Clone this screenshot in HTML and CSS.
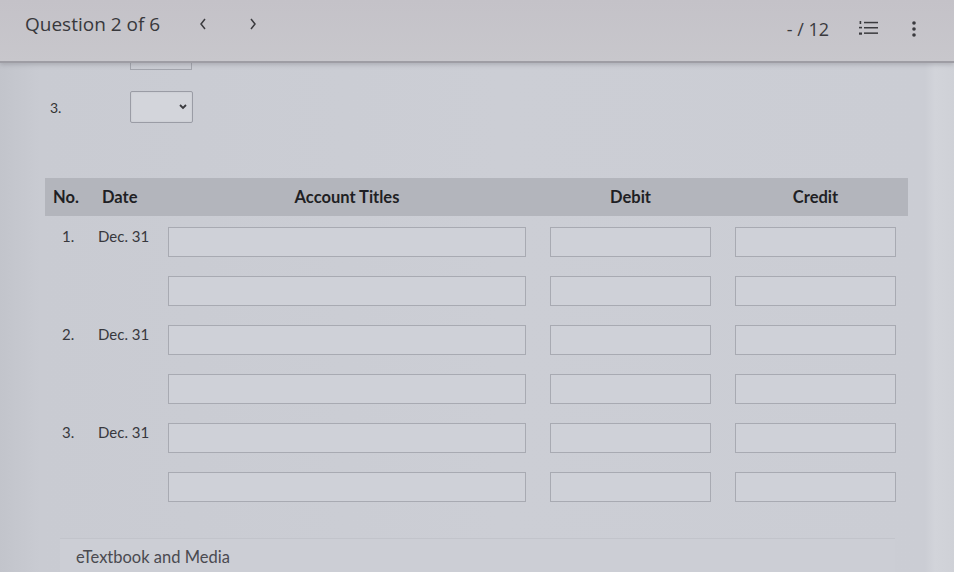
FILE: index.html
```html
<!DOCTYPE html>
<html lang="en">
<head>
<meta charset="utf-8">
<title>Question 2 of 6</title>
<link rel="stylesheet" href="styles.css">
</head>
<body>
<div class="page">
  <header class="topbar">
    <div class="title">Question 2 of 6</div>
    <nav class="pager">
      <svg class="chev" width="10" height="14" viewBox="0 0 10 14"><path d="M7 2 L3 7 L7 12" fill="none" stroke="#3a3a3e" stroke-width="1.5"/></svg>
      <svg class="chev" width="10" height="14" viewBox="0 0 10 14"><path d="M3 2 L7 7 L3 12" fill="none" stroke="#3a3a3e" stroke-width="1.5"/></svg>
    </nav>
    <div class="spacer"></div>
    <div class="score">- / 12</div>
    <svg class="listicon" width="19" height="15" viewBox="0 0 19 15">
      <g fill="#3a3a3e">
        <rect x="0.6" y="0" width="1.6" height="3"/>
        <rect x="0" y="5.8" width="3" height="1.6"/>
        <rect x="0" y="11.5" width="3" height="2.2"/>
        <rect x="5" y="0.8" width="14" height="1.5"/>
        <rect x="5" y="6" width="14" height="1.5"/>
        <rect x="5" y="11.4" width="14" height="1.5"/>
      </g>
    </svg>
    <svg class="kebab" width="6" height="18" viewBox="0 0 6 18">
      <g fill="#3a3a3e"><circle cx="3" cy="3" r="1.8"/><circle cx="3" cy="9" r="1.8"/><circle cx="3" cy="15" r="1.8"/></g>
    </svg>
  </header>

  <main class="content">
    <div class="prev-box"></div>
    <div class="q-row">
      <span class="q-num">3.</span>
      <div class="select">
        <svg width="10" height="8" viewBox="0 0 10 8"><path d="M2 2 L5 5 L8 2" fill="none" stroke="#3a3a3e" stroke-width="1.8"/></svg>
      </div>
    </div>

    <section class="journal">
      <div class="jhead">
        <div class="h-no">No.</div>
        <div class="h-date">Date</div>
        <div class="h-acct">Account Titles</div>
        <div class="h-amt">Debit</div>
        <div class="h-amt">Credit</div>
      </div>
      <div class="jbody">
        <div class="num">1.</div><div class="dt">Dec. 31</div>
        <div class="field acct-in"></div><div class="field amt-in"></div><div class="field amt-in"></div>
        <div class="num"></div><div class="dt"></div>
        <div class="field acct-in"></div><div class="field amt-in"></div><div class="field amt-in"></div>

        <div class="num">2.</div><div class="dt">Dec. 31</div>
        <div class="field acct-in"></div><div class="field amt-in"></div><div class="field amt-in"></div>
        <div class="num"></div><div class="dt"></div>
        <div class="field acct-in"></div><div class="field amt-in"></div><div class="field amt-in"></div>

        <div class="num">3.</div><div class="dt">Dec. 31</div>
        <div class="field acct-in"></div><div class="field amt-in"></div><div class="field amt-in"></div>
        <div class="num"></div><div class="dt"></div>
        <div class="field acct-in"></div><div class="field amt-in"></div><div class="field amt-in"></div>
      </div>
    </section>

    <div class="media">eTextbook and Media</div>
  </main>
</div>
</body>
</html>
```

FILE: styles.css
```css
html, body {
  margin: 0;
  padding: 0;
}
body {
  width: 954px;
  height: 572px;
  overflow: hidden;
  background: #cbcdd4;
  font-family: Lato, "Open Sans", sans-serif;
  color: #2e2e33;
}
.page {
  width: 954px;
  height: 572px;
  display: flex;
  flex-direction: column;
  background: linear-gradient(to right, #c2c4cb 0px, #c9cbd2 40px, #ccced5 500px, #cbcdd4 925px, #d2d4da 935px, #cfd1d7 954px);
}
.topbar {
  height: 61px;
  flex: none;
  display: flex;
  align-items: center;
  padding: 0 37px 0 25px;
  background: linear-gradient(to bottom, #c4c2c8, #c8c7cc);
  border-bottom: 2px solid #9e9da4;
  box-shadow: 0 2px 4px rgba(90, 90, 100, 0.25);
  position: relative;
  z-index: 1;
}
.title {
  font-family: "Open Sans", sans-serif;
  font-size: 19px;
  color: #38383c;
  margin-top: -14px;
}
.pager {
  display: flex;
  gap: 40px;
  margin-left: 38px;
  margin-top: -14px;
}
.spacer { flex: 1; }
.score {
  font-family: "Open Sans", sans-serif;
  font-size: 18px;
  color: #3a3a3e;
  margin-top: -4px;
}
.listicon {
  margin-left: 30px;
  margin-top: -4px;
}
.kebab {
  margin-left: 33px;
  margin-top: -4px;
}
.content {
  flex: 1;
  display: flex;
  flex-direction: column;
}
.prev-box {
  width: 60px;
  height: 6px;
  margin-left: 130px;
  border: 1px solid #a3a5ad;
  border-top: none;
}
.q-row {
  display: flex;
  align-items: center;
  margin-top: 21px;
  height: 32px;
}
.q-num {
  font-size: 14px;
  width: 130px;
  padding-left: 50px;
  box-sizing: border-box;
  color: #333;
}
.select {
  width: 63px;
  height: 32px;
  border: 1px solid #9a9ca5;
  border-radius: 2px;
  background: #d3d5db;
  display: flex;
  align-items: center;
  justify-content: flex-end;
  padding-right: 4px;
  box-sizing: border-box;
  box-shadow: inset 0 0 2px rgba(0,0,0,0.08);
}
.journal {
  margin-top: 55px;
  margin-left: 45px;
  width: 863px;
}
.jhead,
.jbody {
  display: grid;
  grid-template-columns: 57px 66px 358px 185px 185px;
}
.jhead {
  height: 38px;
  align-items: center;
  background: #b3b5bc;
  font-weight: 700;
  font-size: 16.5px;
  color: #1f1f24;
}
.h-no { padding-left: 8px; }
.h-acct { text-align: center; }
.h-amt { text-align: center; padding-left: 24px; }
.jbody {
  grid-auto-rows: 30px;
  row-gap: 19px;
  padding-top: 11px;
}
.num {
  font-size: 15px;
  color: #38383d;
  padding-left: 17px;
  line-height: 18px;
}
.dt {
  font-size: 15px;
  color: #38383d;
  line-height: 18px;
  margin-left: -4px;
}
.field {
  height: 30px;
  border: 1px solid #a8aab2;
  box-sizing: border-box;
  background: #cfd1d8;
}
.acct-in { width: 358px; }
.amt-in { width: 161px; justify-self: end; }
.media {
  margin-top: 36px;
  margin-left: 60px;
  width: 835px;
  height: 40px;
  background: #ccced5;
  border-top: 1px solid #c2c4cb;
  font-size: 16.5px;
  color: #4a4a50;
  padding: 8px 0 0 16px;
  box-sizing: border-box;
}
```
